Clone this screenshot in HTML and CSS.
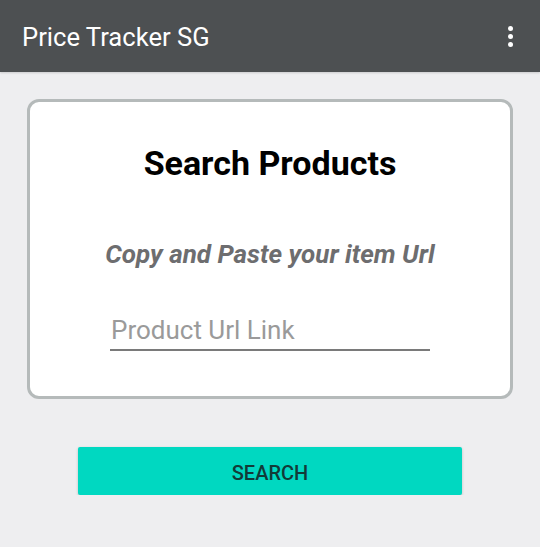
FILE: index.html
```html
<!DOCTYPE html>
<html>
<head>
<meta charset="utf-8">
<link rel="stylesheet" href="styles.css">
</head>
<body>
<div class="toolbar">
  <div class="app-title">Price Tracker SG</div>
  <div class="menu"><span class="dot"></span><span class="dot"></span><span class="dot"></span></div>
</div>
<div class="content">
  <div class="card">
    <div class="card-title">Search Products</div>
    <div class="card-sub">Copy and Paste your item Url</div>
    <div class="field"><span class="hint">Product Url Link</span></div>
  </div>
  <div class="btn">SEARCH</div>
</div>
</body>
</html>
```
FILE: styles.css
```css
html, body {
  margin: 0;
  padding: 0;
  background: #eeeef0;
  font-family: Roboto, "Noto Sans", sans-serif;
}
.toolbar {
  height: 72px;
  background: #4d5052;
  display: flex;
  align-items: center;
  justify-content: space-between;
  padding: 0 27px 0 22px;
  box-shadow: 0 1px 2px rgba(0,0,0,0.15);
}
.app-title {
  color: #ffffff;
  font-size: 25.6px;
  line-height: 26px;
  padding-top: 2px;
}
.menu {
  display: flex;
  flex-direction: column;
  gap: 3px;
  align-items: center;
}
.dot {
  width: 5px;
  height: 5px;
  border-radius: 50%;
  background: #ffffff;
}
.content {
  padding: 27px 27px 0 27px;
}
.card {
  height: 294px;
  background: #ffffff;
  border: 3px solid #b5baba;
  border-radius: 12px;
  display: flex;
  flex-direction: column;
  align-items: center;
}
.card-title {
  margin-top: 44px;
  font-size: 34px;
  line-height: 34px;
  font-weight: bold;
  color: #000000;
}
.card-sub {
  margin-top: 61px;
  font-size: 26px;
  line-height: 26px;
  font-weight: bold;
  font-style: italic;
  color: #6d6d6f;
}
.field {
  margin-top: 50px;
  width: 320px;
  border-bottom: 2px solid #7a7a7a;
  padding-bottom: 6px;
}
.hint {
  display: block;
  font-size: 26px;
  line-height: 26px;
  color: #9a9a9a;
  padding-left: 1px;
}
.btn {
  width: 384px;
  height: 48px;
  margin: 48px auto 0 auto;
  background: #00d8c1;
  border-radius: 2px;
  box-shadow: 0 1px 3px rgba(0,0,0,0.2);
  display: flex;
  align-items: center;
  justify-content: center;
  font-size: 20px;
  line-height: 20px;
  padding-top: 4px;
  box-sizing: border-box;
  font-weight: 500;
  color: #123b38;
}
```
